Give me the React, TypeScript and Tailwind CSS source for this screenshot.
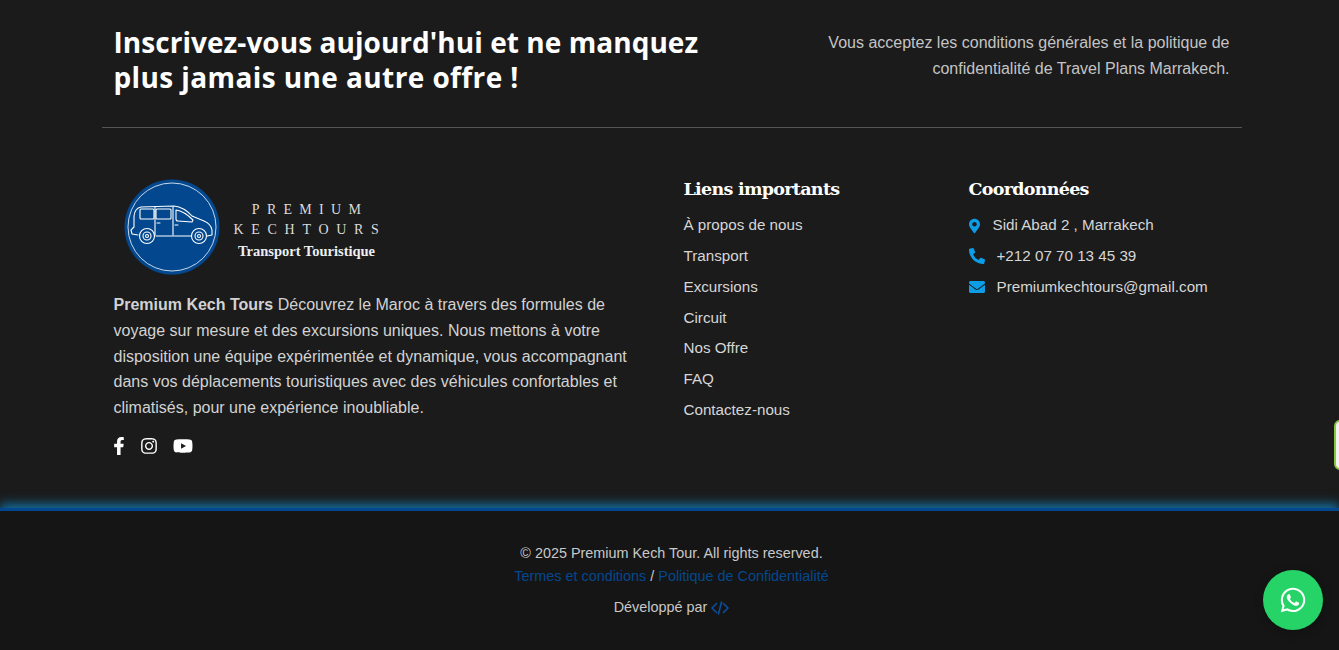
import { FaEnvelope, FaFacebookF, FaInstagram, FaMapMarkerAlt, FaPhoneAlt, FaWhatsapp, FaYoutube } from 'react-icons/fa';

const links = ['À propos de nous', 'Transport', 'Excursions', 'Circuit', 'Nos Offre', 'FAQ', 'Contactez-nous'];

function VanLogo() {
  return (
    <svg width="96" height="96" viewBox="0 0 96 96" fill="none" className="shrink-0">
      <circle cx="48" cy="48" r="47.5" fill="#03488f" />
      <circle cx="48" cy="48" r="44" stroke="#dbe6f2" strokeWidth="0.9" />
      <g stroke="#fff" strokeWidth="1.1" strokeLinejoin="round" strokeLinecap="round">
        <path d="M14 56 L8 55 L7 51 L10 48 L10 37 Q11 29 17 28 L50 27 Q60 28 68 37 L80 42 Q87 45 88 51 L88 56 L83 57 M67 57 L32 57" />
        <rect x="16" y="30" width="14" height="10" rx="1" />
        <rect x="32" y="30" width="15" height="10" rx="1" />
        <path d="M52 31 Q60 32 69 41 L68 43 L54 42 Q52 42 52 40 Z" />
        <path d="M31 28 L31 56 M49 28 L49 56" />
        <path d="M33 44 h3 M51 46 h3" />
        <circle cx="23" cy="57" r="7.5" fill="#03488f" />
        <circle cx="23" cy="57" r="4" />
        <circle cx="23" cy="57" r="1.5" />
        <circle cx="75" cy="57" r="7.5" fill="#03488f" />
        <circle cx="75" cy="57" r="4" />
        <circle cx="75" cy="57" r="1.5" />
      </g>
    </svg>
  );
}

export default function App() {
  return (
    <div className="relative h-[650px] w-full overflow-hidden bg-[#1b1b1b] font-['Liberation_Sans',Arial,sans-serif] text-[#c9c9c9]">
      <div className="w-[1343px]">
        <div className="mx-auto h-[508px] w-[1140px]">
          {/* newsletter */}
          <div className="flex h-[128px] items-start border-b border-[#555] px-3 pt-[25px]">
            <h2 className="w-[640px] font-['Open_Sans',sans-serif] text-[28px] leading-[35px] font-bold whitespace-nowrap text-white">
              <span className="tracking-[0.05px]">Inscrivez-vous aujourd'hui et ne manquez</span>
              <br />
              <span className="tracking-[0.4px]">plus jamais une autre offre !</span>
            </h2>
            <p className="ml-auto w-[420px] pt-[5px] text-right text-base leading-[26px] text-[#c4c4c4]">
              Vous acceptez les conditions générales et la politique de confidentialité de Travel Plans Marrakech.
            </p>
          </div>

          <div className="flex pt-[50px]">
            {/* about */}
            <div className="w-[570px] px-3">
              <div className="flex h-[97px] items-center pl-[10px]">
                <VanLogo />
                <div className="ml-[12px] flex w-[150px] flex-col items-center pt-[8px] font-['Liberation_Serif',serif] leading-none text-[#dcdcdc]">
                  <span className="pl-[7px] text-[14px] tracking-[0.52em]">PREMIUM</span>
                  <span className="mt-[6px] pl-[7px] text-[14px] tracking-[0.55em] whitespace-nowrap">KECHTOURS</span>
                  <span className="mt-[7px] text-[14.5px] font-bold whitespace-nowrap text-[#efefef]">Transport Touristique</span>
                </div>
              </div>
              <p className="mt-[17px] w-[520px] text-base leading-[25.8px] text-[#d2d2d2]">
                <strong className="font-bold">Premium Kech Tours</strong> Découvrez le Maroc à travers des formules de voyage sur mesure et des excursions uniques. Nous mettons à votre disposition une équipe expérimentée et dynamique, vous accompagnant dans vos déplacements touristiques avec des véhicules confortables et climatisés, pour une expérience inoubliable.
              </p>
              <div className="mt-[15px] flex items-center text-white">
                <FaFacebookF size={18} className="-ml-[4px]" />
                <FaInstagram size={18} className="ml-[12px]" />
                <FaYoutube size={20} className="ml-[15px]" />
              </div>
            </div>

            {/* links */}
            <div className="w-[285px] px-3">
              <h3 className="font-['DejaVu_Serif',serif] text-[17.5px] leading-[22px] font-bold tracking-[-0.7px] text-white">Liens importants</h3>
              <ul className="mt-[14.3px] flex flex-col gap-[8px] text-[15.2px] leading-[22.8px] text-[#d6d6d6]">
                {links.map((l) => (
                  <li key={l}>{l}</li>
                ))}
              </ul>
            </div>

            {/* contact */}
            <div className="w-[285px] px-3">
              <h3 className="font-['DejaVu_Serif',serif] text-[17.5px] leading-[22px] font-bold tracking-[-0.7px] text-white">Coordonnées</h3>
              <ul className="mt-[14.3px] flex flex-col gap-[8px] text-[15.2px] leading-[22.8px] text-[#d6d6d6]">
                <li className="flex items-center gap-[13px]">
                  <FaMapMarkerAlt size={16} className="w-[11px] text-[#0d9ce6]" />
                  Sidi Abad 2 , Marrakech
                </li>
                <li className="flex items-center gap-[12px]">
                  <FaPhoneAlt size={16} className="text-[#0d9ce6]" />
                  +212 07 70 13 45 39
                </li>
                <li className="flex items-center gap-[12px]">
                  <FaEnvelope size={16} className="text-[#0d9ce6]" />
                  Premiumkechtours@gmail.com
                </li>
              </ul>
            </div>
          </div>
        </div>
      </div>

      {/* bottom bar */}
      <div className="h-[142px] border-t-[3px] border-[#03488f] bg-[#151515] shadow-[0_-4px_10px_#0d9ce6aa]">
        <div className="w-[1343px] pt-[31px] text-center text-[14.4px] leading-[23px] text-[#c8c8c8]">
          <p>© 2025 Premium Kech Tour. All rights reserved.</p>
          <p>
            <a className="text-[#03488f]">Termes et conditions</a> / <a className="text-[#03488f]">Politique de Confidentialité</a>
          </p>
          <p className="mt-[8px] flex items-center justify-center gap-[4px]">
            Développé par
            <svg width="18" height="14" viewBox="0 0 18 14" fill="none" stroke="#0a4f9e" strokeWidth="1.6" strokeLinecap="round" strokeLinejoin="round">
              <path d="M5.5 2.5 L1 7 L5.5 11.5 M12.5 2.5 L17 7 L12.5 11.5 M10.5 1 L7.5 13" />
            </svg>
          </p>
        </div>
      </div>

      {/* floating widgets */}
      <div className="absolute top-[420px] right-[-10px] h-[50px] w-[15px] rounded-[6px] border-2 border-[#8cc63f] bg-[#f2f2f2]" />
      <a className="absolute top-[570px] left-[1263px] flex h-[60px] w-[60px] items-center justify-center rounded-full bg-[#25d366] text-white shadow-[0_2px_10px_#00000040]">
        <FaWhatsapp size={28} />
      </a>
    </div>
  );
}
